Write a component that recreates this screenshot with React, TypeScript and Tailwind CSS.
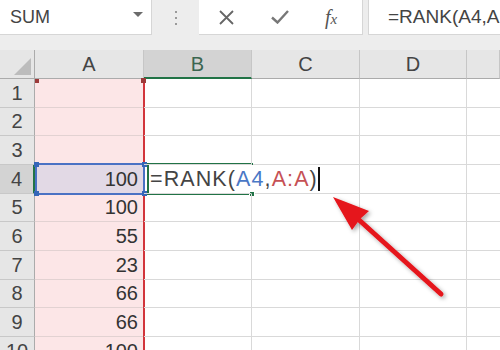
import React from 'react';

const ROWS = [
  { n: 1, v: '' },
  { n: 2, v: '' },
  { n: 3, v: '' },
  { n: 4, v: '100' },
  { n: 5, v: '100' },
  { n: 6, v: '55' },
  { n: 7, v: '23' },
  { n: 8, v: '66' },
  { n: 9, v: '66' },
  { n: 10, v: '100' },
];

const COLS = ['A', 'B', 'C', 'D', ''];
const W = ['w-[109px]', 'w-[108px]', 'w-[108px]', 'w-[107px]', 'w-[33px]'];

function Toolbar() {
  return (
    <div className="flex h-[50px] items-start bg-[#ededed]">
      <div className="relative flex h-[35px] w-[152px] items-center border-b border-r border-[#d6d6d6] bg-white pl-[10px] text-[18px] text-[#444]">
        SUM
        <svg className="absolute left-[132px] top-[11px]" width="12" height="7" viewBox="0 0 12 7">
          <path d="M1 1 L11 1 L6 6 Z" fill="#6b6b6b" />
        </svg>
      </div>
      <div className="flex h-[35px] w-[47px] flex-col items-center justify-center gap-[4px]">
        <span className="h-[2px] w-[2px] bg-[#9a9a9a]" />
        <span className="h-[2px] w-[2px] bg-[#9a9a9a]" />
        <span className="h-[2px] w-[2px] bg-[#9a9a9a]" />
      </div>
      <div className="flex h-[35px] w-[164px] items-center border-b border-r border-[#d6d6d6] bg-white">
        <svg className="ml-[20px]" width="15" height="15" viewBox="0 0 15 15">
          <path d="M1 1 L14 14 M14 1 L1 14" stroke="#666" strokeWidth="1.8" fill="none" />
        </svg>
        <svg className="ml-[37px]" width="18" height="14" viewBox="0 0 18 14">
          <path d="M1 7.5 L6.5 12.5 L17 1" stroke="#777" strokeWidth="2.4" fill="none" />
        </svg>
        <span className="ml-[36px] text-[20px] italic text-[#555] [font-family:'Liberation_Serif',serif]">
          f<span className="text-[15px]">x</span>
        </span>
      </div>
      <div className="h-[35px] w-[5px]" />
      <div className="flex h-[35px] flex-1 items-center overflow-hidden whitespace-nowrap border-b border-l border-[#d6d6d6] bg-white pl-[19px] text-[19px] text-[#444]">
        =RANK(A4,A:A)
      </div>
    </div>
  );
}

function HeaderRow() {
  return (
    <div className="flex h-[29px]">
      <div className="relative w-[35px] border-b border-r border-[#ababab] bg-[#e6e6e6]">
        <svg className="absolute bottom-[3px] right-[3px]" width="17" height="17" viewBox="0 0 17 17">
          <path d="M17 0 L17 17 L0 17 Z" fill="#bcbcbc" />
        </svg>
      </div>
      {COLS.map((c, i) => (
        <div
          key={i}
          className={`${W[i]} flex items-center justify-center text-[20px] ${
            c === 'B'
              ? 'border-b-2 border-r border-b-[#217346] border-r-[#c6c6c6] bg-[#d3d3d3] text-[#3b6650]'
              : 'border-b border-r border-b-[#ababab] border-r-[#c6c6c6] bg-[#e6e6e6] text-[#444]'
          }`}
        >
          {c}
        </div>
      ))}
    </div>
  );
}

function Row({ n, v }: { n: number; v: string }) {
  const sel = n === 4;
  return (
    <div className="flex h-[28.67px]">
      <div
        className={`flex w-[35px] items-center justify-center border-b border-b-[#c8c8c8] text-[20px] text-[#444] ${
          sel ? 'border-r-2 border-r-[#217346] bg-[#d3d3d3]' : 'border-r border-r-[#ababab] bg-[#e6e6e6]'
        }`}
      >
        {n}
      </div>
      <div
        className={`flex w-[109px] items-center justify-end border-b border-[#e2d2d2] pr-[6px] text-[20px] text-[#333] ${
          sel ? 'bg-[#e2d9e5]' : 'bg-[#fce6e7]'
        }`}
      >
        {v}
      </div>
      <div className={`relative z-10 flex w-[108px] items-center whitespace-nowrap border-b border-r border-[#d9d9d9] ${sel ? 'border-r-transparent' : ''}`}>
        {sel ? (
          <span className="pl-[6px] text-[21.5px] tracking-[1.1px] text-[#444]">
            =RANK(<span className="text-[#4a78c6]">A4</span>,<span className="text-[#c65155]">A:A</span>)
          </span>
        ) : null}
      </div>
      <div className="w-[108px] border-b border-r border-[#d9d9d9]" />
      <div className="w-[107px] border-b border-r border-[#d9d9d9]" />
      <div className="w-[33px] border-b border-[#d9d9d9]" />
    </div>
  );
}

export default function App() {
  return (
    <div className="relative h-[350px] w-[500px] overflow-hidden bg-white [font-family:'Liberation_Sans',Arial,sans-serif]">
      <Toolbar />
      <HeaderRow />
      {ROWS.map((r) => (
        <Row key={r.n} n={r.n} v={r.v} />
      ))}

      {/* A:A range highlight */}
      <div className="absolute left-[143px] top-[79px] h-[271px] w-[2px] bg-[#d2353c]" />
      <div className="absolute left-[35px] top-[79px] h-[4px] w-[4px] bg-[#9c3a3a]" />
      <div className="absolute left-[141px] top-[78px] h-[5px] w-[5px] bg-[#9c3a3a]" />

      {/* A4 reference */}
      <div className="absolute left-[35px] top-[163px] h-[32px] w-[110px] border-2 border-[#4a72c4]" />
      <div className="absolute left-[34px] top-[162px] h-[5px] w-[5px] bg-[#3566b8]" />
      <div className="absolute left-[142px] top-[162px] h-[5px] w-[5px] bg-[#3566b8]" />
      <div className="absolute left-[34px] top-[191px] h-[5px] w-[5px] bg-[#3566b8]" />
      <div className="absolute left-[142px] top-[191px] h-[5px] w-[5px] bg-[#3566b8]" />

      {/* B4 active cell */}
      <div className="absolute left-[147px] top-[163px] h-[2px] w-[106px] bg-[#217346]" />
      <div className="absolute left-[147px] top-[163px] h-[32px] w-[2px] bg-[#217346]" />
      <div className="absolute left-[147px] top-[193px] h-[2px] w-[103px] bg-[#217346]" />
      <div className="absolute left-[249px] top-[191px] h-[6px] w-[6px] border border-white bg-[#217346]" />

      {/* caret */}
      <div className="absolute left-[318px] top-[167px] h-[24px] w-[1.5px] bg-[#111]" />

      <svg className="absolute left-0 top-0" width="500" height="350" viewBox="0 0 500 350">
        <defs>
          <filter id="sh" x="-20%" y="-20%" width="140%" height="140%">
            <feDropShadow dx="2" dy="2" stdDeviation="2" floodColor="#000" floodOpacity="0.35" />
          </filter>
        </defs>
        <g filter="url(#sh)">
          <line x1="441" y1="294" x2="358" y2="219" stroke="#e5141b" strokeWidth="5" strokeLinecap="round" />
          <polygon points="333,197 369,211 360,219 352,230" fill="#e5141b" />
        </g>
      </svg>
    </div>
  );
}
